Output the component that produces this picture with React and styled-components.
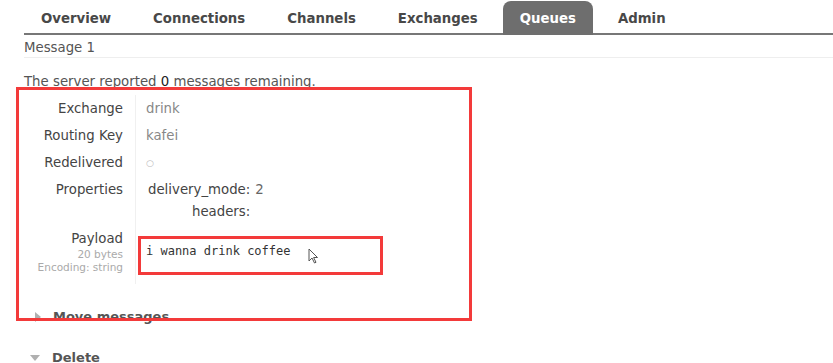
import React from 'react'
import styled, { createGlobalStyle } from 'styled-components'

const GlobalStyle = createGlobalStyle`
    body{
        margin: 0;
        background: #fff;
        font-family: "DejaVu Sans", Verdana, sans-serif;
        font-size: 13.3px;
        color: #484848;
    }
`

const tabs = ['Overview', 'Connections', 'Channels', 'Exchanges', 'Queues', 'Admin']

function App() {
    return (
        <Page>
            <GlobalStyle />
            <Tabs>
                {tabs.map(t => <Tab key={t} active={t === 'Queues'}>{t}</Tab>)}
            </Tabs>
            <Heading>Message 1</Heading>
            <Note>The server reported <Count>0</Count> messages remaining.</Note>
            <Section>
                <Highlight />
                <Details>
                    <Label>Exchange</Label>
                    <Value>drink</Value>
                    <Label>Routing Key</Label>
                    <Value>kafei</Value>
                    <Label>Redelivered</Label>
                    <Value><Circle>○</Circle></Value>
                    <Label tall>Properties</Label>
                    <Value tall>
                        <Props>
                            <PropKey>delivery_mode:</PropKey>
                            <PropVal>2</PropVal>
                            <PropKey>headers:</PropKey>
                            <PropVal />
                        </Props>
                    </Value>
                    <Label last>
                        Payload
                        <Small>20 bytes</Small>
                        <Small>Encoding: string</Small>
                    </Label>
                    <Value last>
                        <PayloadBox>
                            i wanna drink coffee
                            <Cursor viewBox="0 0 10 16" width="10" height="16">
                                <path d="M1 1 L1 13 L4 10 L6.5 15 L8 14.3 L5.6 9.5 L9.5 9.5 Z" fill="#fff" stroke="#555" strokeWidth="1" strokeLinejoin="round" />
                            </Cursor>
                        </PayloadBox>
                    </Value>
                </Details>
                <Toggle>
                    <Arrow viewBox="0 0 6 10" width="6" height="10"><path d="M0 0 L6 5 L0 10 Z" fill="#b0b0b0" /></Arrow>
                    Move messages
                </Toggle>
            </Section>
            <Toggle open>
                <Arrow viewBox="0 0 10 6" width="10" height="6"><path d="M0 0 L10 0 L5 6 Z" fill="#b0b0b0" /></Arrow>
                Delete
            </Toggle>
        </Page>
    )
}

const Page = styled.div`
    padding-left: 24px;
`

const Tabs = styled.nav`
    display: flex;
    gap: 8px;
    border-bottom: 2px solid #777;
    height: 35px;
    box-sizing: border-box;
    padding-top: 1px;
`

const Tab = styled.div`
    padding: 0 17px;
    height: 34px;
    line-height: 35px;
    border-radius: 8px 8px 0 0;
    font-weight: bold;
    font-size: 13.3px;
    color: ${p => p.active ? '#fff' : '#484848'};
    background: ${p => p.active ? '#6e6e6e' : 'transparent'};
`

const Heading = styled.h2`
    margin: 0;
    padding-top: 3px;
    font-size: 13.3px;
    font-weight: normal;
    line-height: 19px;
    color: #555;
    border-bottom: 1px solid #eee;
`

const Note = styled.p`
    margin: 19px 0 0;
    line-height: 10px;
    color: #555;
`

const Count = styled.span`
    color: #222;
`

const Section = styled.section`
    position: relative;
    padding-top: 8px;
`

const Highlight = styled.div`
    position: absolute;
    left: -8px;
    top: 0;
    width: 456px;
    height: 234px;
    box-sizing: border-box;
    border: 3px solid #f33a3a;
    pointer-events: none;
    z-index: 2;
`

const Details = styled.div`
    display: grid;
    grid-template-columns: 111px 1fr;
`

const Label = styled.div`
    text-align: right;
    padding: ${p => p.tall ? '2px 12px 2px 0' : '4px 12px 4px 0'};
    line-height: ${p => p.tall ? '22px' : '19px'};
    padding-bottom: ${p => p.last ? '10px' : undefined};
    color: #444;
`

const Value = styled.div`
    border-left: 1px solid #f0f0f0;
    padding: ${p => p.tall ? '2px 0 2px 10px' : '4px 0 4px 10px'};
    line-height: ${p => p.tall ? '22px' : '19px'};
    padding: ${p => p.last ? '11px 0 6px 2px' : undefined};
    color: #888;
`

const Circle = styled.span`
    font-size: 9px;
    color: #bbb;
    vertical-align: middle;
`

const Props = styled.div`
    display: grid;
    grid-template-columns: max-content max-content;
    column-gap: 5px;
    padding-left: 2px;
`

const PropKey = styled.span`
    text-align: right;
    color: #444;
`

const PropVal = styled.span`
    color: #666;
`

const Small = styled.div`
    font-size: 10.5px;
    line-height: 13px;
    color: #aaa;
`

const PayloadBox = styled.div`
    position: relative;
    width: 245px;
    height: 39px;
    box-sizing: border-box;
    border: 3px solid #f33a3a;
    padding: 4px 5px;
    font-family: "DejaVu Sans Mono", "Liberation Mono", monospace;
    font-size: 12px;
    line-height: 16px;
    color: #333;
`

const Cursor = styled.svg`
    position: absolute;
    left: 167px;
    top: 9px;
`

const Toggle = styled.h3`
    display: flex;
    align-items: center;
    margin: ${p => p.open ? '21px 0 0' : '23px 0 0'};
    padding-left: ${p => p.open ? '6px' : '11px'};
    gap: 12px;
    font-size: 13px;
    line-height: 20px;
    color: #555;
`

const Arrow = styled.svg`
    flex: none;
`

export default App
